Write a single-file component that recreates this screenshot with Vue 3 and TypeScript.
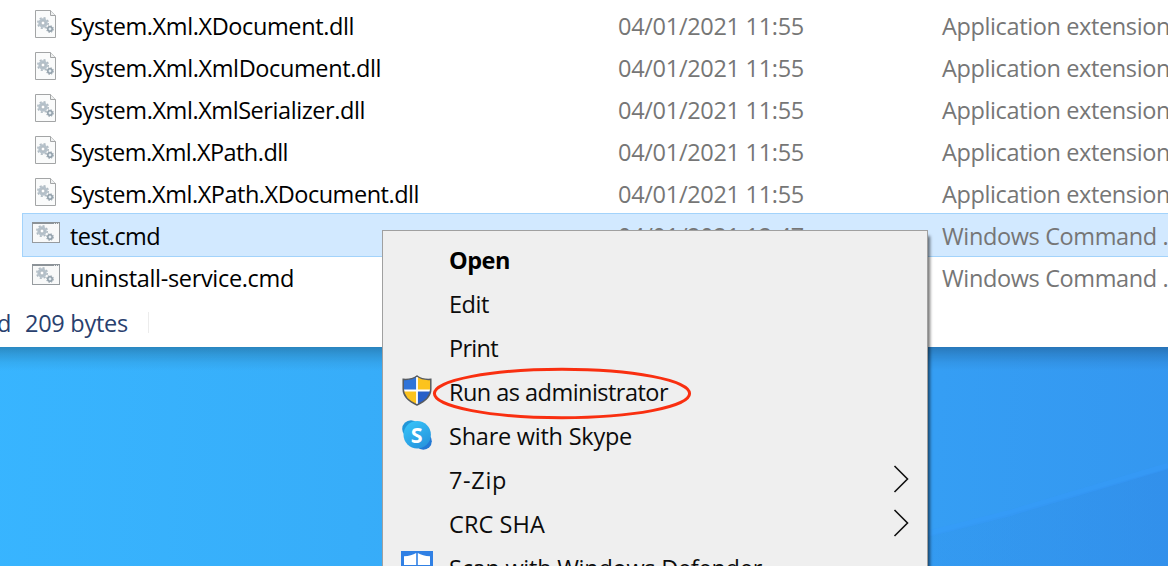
<script setup lang="ts">
type FileKind = 'dll' | 'cmd'
interface FileRow {
  name: string
  width: number
  date: string
  type: string
  kind: FileKind
  selected?: boolean
}
interface MenuItem {
  label: string
  width: number
  icon?: 'shield' | 'skype' | 'defender'
  bold?: boolean
  submenu?: boolean
  circled?: boolean
}

const dll = (name: string, width: number): FileRow => ({
  name, width, date: '04/01/2021 11:55', type: 'Application extension', kind: 'dll',
})

const files: FileRow[] = [
  dll('System.Xml.XDocument.dll', 284),
  dll('System.Xml.XmlDocument.dll', 311),
  dll('System.Xml.XmlSerializer.dll', 295),
  dll('System.Xml.XPath.dll', 218),
  dll('System.Xml.XPath.XDocument.dll', 349),
  { name: 'test.cmd', width: 90, date: '04/01/2021 12:47', type: 'Windows Command ...', kind: 'cmd', selected: true },
  { name: 'uninstall-service.cmd', width: 224, date: '04/01/2021 12:47', type: 'Windows Command ...', kind: 'cmd' },
]
const typeWidths: Record<string, number> = {
  'Application extension': 228,
  'Windows Command ...': 238,
}

const menu: MenuItem[] = [
  { label: 'Open', width: 61, bold: true },
  { label: 'Edit', width: 40 },
  { label: 'Print', width: 49 },
  { label: 'Run as administrator', width: 219, icon: 'shield', circled: true },
  { label: 'Share with Skype', width: 183, icon: 'skype' },
  { label: '7-Zip', width: 58, submenu: true },
  { label: 'CRC SHA', width: 96, submenu: true },
  { label: 'Scan with Windows Defender', width: 313, icon: 'defender' },
]

// Tracking that makes a label take up the given advance width.
const ctx = document.createElement('canvas').getContext('2d')!
function track(text: string, width: number, bold = false) {
  ctx.font = `${bold ? 700 : 400} 23.5px "Open Sans"`
  const spacing = (width - ctx.measureText(text).width) / text.length
  return { letterSpacing: `${spacing.toFixed(3)}px` }
}
</script>

<template>
  <div class="desktop">
    <svg class="wallpaper" viewBox="0 0 1168 566">
      <defs>
        <linearGradient id="beam" x1="0" y1="0" x2="1" y2="0">
          <stop offset="0" stop-color="#2f8fe6" stop-opacity=".2" />
          <stop offset="1" stop-color="#2f86e4" stop-opacity=".4" />
        </linearGradient>
      </defs>
      <path d="M900 543L1010 514L1168 468V566H900Z" fill="url(#beam)" />
      <path d="M900 541L1010 513L1168 466" fill="none" stroke="#369cfc" stroke-opacity=".4" stroke-width="6" />
    </svg>

    <section class="explorer">
      <div class="files">
        <div v-for="f in files" :key="f.name" class="row" :class="{ selected: f.selected }">
          <span class="icon">
            <svg v-if="f.kind === 'dll'" class="doc" width="21" height="28" viewBox="0 0 21 28">
              <path d="M.5.5H15.5L20.5 5.5V27.5H.5Z" fill="#fafbfb" stroke="#a3a5a6" />
              <path d="M15.5.5V5.5H20.5" fill="#eef0f0" stroke="#a3a5a6" />
              <circle cx="8" cy="13" r="5.2" fill="none" stroke="#b0bbc3" stroke-width="1.6" stroke-dasharray="2.1 1.98" />
              <circle cx="8" cy="13" r="3.5" fill="#fff" stroke="#b5c1ca" stroke-width="2.4" />
              <circle cx="8" cy="13" r="2" fill="#fff" stroke="#94a1ab" stroke-width=".8" />
              <circle cx="15" cy="19" r="3.3" fill="none" stroke="#a5afb7" stroke-width="1.2" stroke-dasharray="1.5 1.1" />
              <circle cx="15" cy="19" r="2.2" fill="#e6edf2" stroke="#8f9ea9" stroke-width="1.5" />
            </svg>
            <svg v-else class="cmd" width="28" height="21" viewBox="0 0 28 21">
              <rect x=".5" y=".5" width="27" height="20" fill="#f8f9f9" stroke="#969b9f" />
              <path d="M0 1H28" stroke="#8c9398" stroke-width="2" />
              <path d="M22 1.5H27" stroke="#e4e7e9" stroke-dasharray="1 1" />
              <circle cx="10" cy="9" r="5.2" fill="none" stroke="#b0bbc3" stroke-width="1.6" stroke-dasharray="2.1 1.98" />
              <circle cx="10" cy="9" r="3.5" fill="#fff" stroke="#b5c1ca" stroke-width="2.4" />
              <circle cx="10" cy="9" r="2" fill="#fff" stroke="#94a1ab" stroke-width=".8" />
              <circle cx="18" cy="15" r="3.3" fill="none" stroke="#a5afb7" stroke-width="1.2" stroke-dasharray="1.5 1.1" />
              <circle cx="18" cy="15" r="2.2" fill="#e6edf2" stroke="#8f9ea9" stroke-width="1.5" />
            </svg>
          </span>
          <span class="name" :style="track(f.name, f.width)">{{ f.name }}</span>
          <span class="date" :style="track(f.date, 186)">{{ f.date }}</span>
          <span class="type" :style="track(f.type, typeWidths[f.type])">{{ f.type }}</span>
        </div>
      </div>
      <footer class="status">
        <span class="tail">d</span>
        <span class="size" :style="track('209 bytes', 103)">209 bytes</span>
        <i class="divider" />
      </footer>
    </section>

    <nav class="menu">
      <div v-for="m in menu" :key="m.label" class="item" :class="{ bold: m.bold }">
        <span class="glyph">
          <svg v-if="m.icon === 'shield'" class="shield" width="30" height="31" viewBox="0 0 30 31">
            <defs>
              <clipPath id="shield-clip">
                <path d="M15 1C11.2 3.8 6 4.7 1.2 4.3V14C1.2 22 7.5 26.7 15 30C22.5 26.7 28.8 22 28.8 14V4.3C24 4.7 18.8 3.8 15 1Z" />
              </clipPath>
            </defs>
            <g clip-path="url(#shield-clip)">
              <rect width="15" height="15.5" fill="#2f73d8" />
              <rect x="15" width="15" height="15.5" fill="#fcc31e" />
              <rect y="15.5" width="15" height="16" fill="#fcc31e" />
              <rect x="15" y="15.5" width="15" height="16" fill="#285fc8" />
              <path d="M15 0V31M0 15.5H30" stroke="#fff" stroke-width="1.8" />
            </g>
            <path d="M15 1C11.2 3.8 6 4.7 1.2 4.3V14C1.2 22 7.5 26.7 15 30C22.5 26.7 28.8 22 28.8 14V4.3C24 4.7 18.8 3.8 15 1Z" fill="none" stroke="#575b60" stroke-width="1.5" />
          </svg>
          <svg v-else-if="m.icon === 'skype'" class="skype" width="30" height="30" viewBox="0 0 30 30">
            <defs>
              <linearGradient id="sky" x1=".2" y1="0" x2=".8" y2="1">
                <stop offset="0" stop-color="#36c3f8" />
                <stop offset="1" stop-color="#2692dc" />
              </linearGradient>
            </defs>
            <circle cx="9" cy="9" r="8.8" fill="#2196d8" />
            <circle cx="21.3" cy="21.3" r="8.5" fill="#2278d4" />
            <circle cx="15.2" cy="14.8" r="13.7" fill="url(#sky)" />
            <text x="14.7" y="22.6" text-anchor="middle" class="skype-s">S</text>
          </svg>
          <svg v-else-if="m.icon === 'defender'" class="defender" width="32" height="32" viewBox="0 0 32 32">
            <rect width="32" height="32" fill="#3080e4" />
            <path d="M3 5.2C8 5 12 4 15.2 2V14H3ZM16.8 2C20 4 24 5 29 5.2V14H16.8Z" fill="#fff" />
            <path d="M3 15.4H15.2V29C8 26 3 21 3 15.4ZM16.8 15.4H29C29 21 24 26 16.8 29Z" fill="#fff" />
          </svg>
        </span>
        <span class="label" :style="track(m.label, m.width, m.bold)">{{ m.label }}</span>
        <svg v-if="m.submenu" class="arrow" width="16" height="28" viewBox="0 0 16 28">
          <path d="M1.5 1L14.5 14L1.5 27" fill="none" stroke="#111" stroke-width="1.6" />
        </svg>
        <svg v-if="m.circled" class="ring" width="260" height="54" viewBox="0 0 260 54">
          <ellipse cx="130" cy="26.5" rx="127.6" ry="24.2" fill="none" stroke="#f92f10" stroke-width="3" />
        </svg>
      </div>
    </nav>
  </div>
</template>

<style>
html, body { margin: 0; overflow: hidden; }
</style>

<style scoped>
.desktop {
  position: relative;
  width: 1168px;
  height: 566px;
  overflow: hidden;
  background: linear-gradient(93deg, #38b5ff 0%, #37adf9 32%, #359ef4 80%, #3497f0 100%);
  font-family: "Open Sans", "Noto Sans", sans-serif;
  font-size: 23.5px;
  white-space: pre;
}
.wallpaper {
  position: absolute;
  inset: 0;
}
.explorer {
  position: relative;
  height: 347px;
  box-sizing: border-box;
  padding: 4px 0 0 23px;
  background: #fff;
}
/* Window shadow falling on the desktop along the whole bottom edge. */
.explorer::after {
  content: "";
  position: absolute;
  left: 0;
  right: 0;
  top: 100%;
  height: 24px;
  background: linear-gradient(rgba(0, 0, 0, .24), rgba(0, 0, 0, .14) 30%, rgba(0, 0, 0, .05) 65%, rgba(0, 0, 0, 0));
}
.row {
  display: grid;
  grid-template-columns: 47px 548px 324px 1fr;
  height: 42px;
  line-height: 45px;
  color: #767676;
}
.row.selected {
  background: #d2e9ff;
  box-shadow: 0 0 0 1px #a3d3fb;
}
.icon {
  display: flex;
  align-items: flex-start;
  padding-left: 9px;
}
.doc { margin: 6px 0 0 3px; }
.cmd { margin-top: 8px; }
.name { color: #000; }
.status {
  display: flex;
  align-items: center;
  height: 49px;
  margin-left: -26px;
  color: #28406e;
}
.tail { width: 28px; }
.size { width: 123px; }
.divider {
  width: 1px;
  height: 21px;
  background: #ececec;
}
.menu {
  position: absolute;
  left: 382px;
  top: 230px;
  width: 546px;
  height: 370px;
  box-sizing: border-box;
  padding-top: 7px;
  border: 1px solid #a0a0a0;
  background: #efefef;
  box-shadow: 3px 5px 3px -1px rgba(0, 0, 0, .55);
  color: #0c0c0c;
}
.item {
  position: relative;
  display: flex;
  align-items: flex-start;
  height: 44px;
  line-height: 44px;
}
.bold { font-weight: 700; color: #000; }
.glyph {
  display: flex;
  width: 66px;
  height: 44px;
}
.shield { margin: 5px 0 0 19px; }
.skype { margin: 6px 0 0 19px; }
.defender { margin: 5px 0 0 18px; }
.skype-s {
  font: 700 21.5px "Open Sans", sans-serif;
  fill: #fff;
}
.arrow {
  margin: 7px 18px 0 auto;
}
.ring {
  position: absolute;
  left: 49px;
  top: -3px;
}
</style>
